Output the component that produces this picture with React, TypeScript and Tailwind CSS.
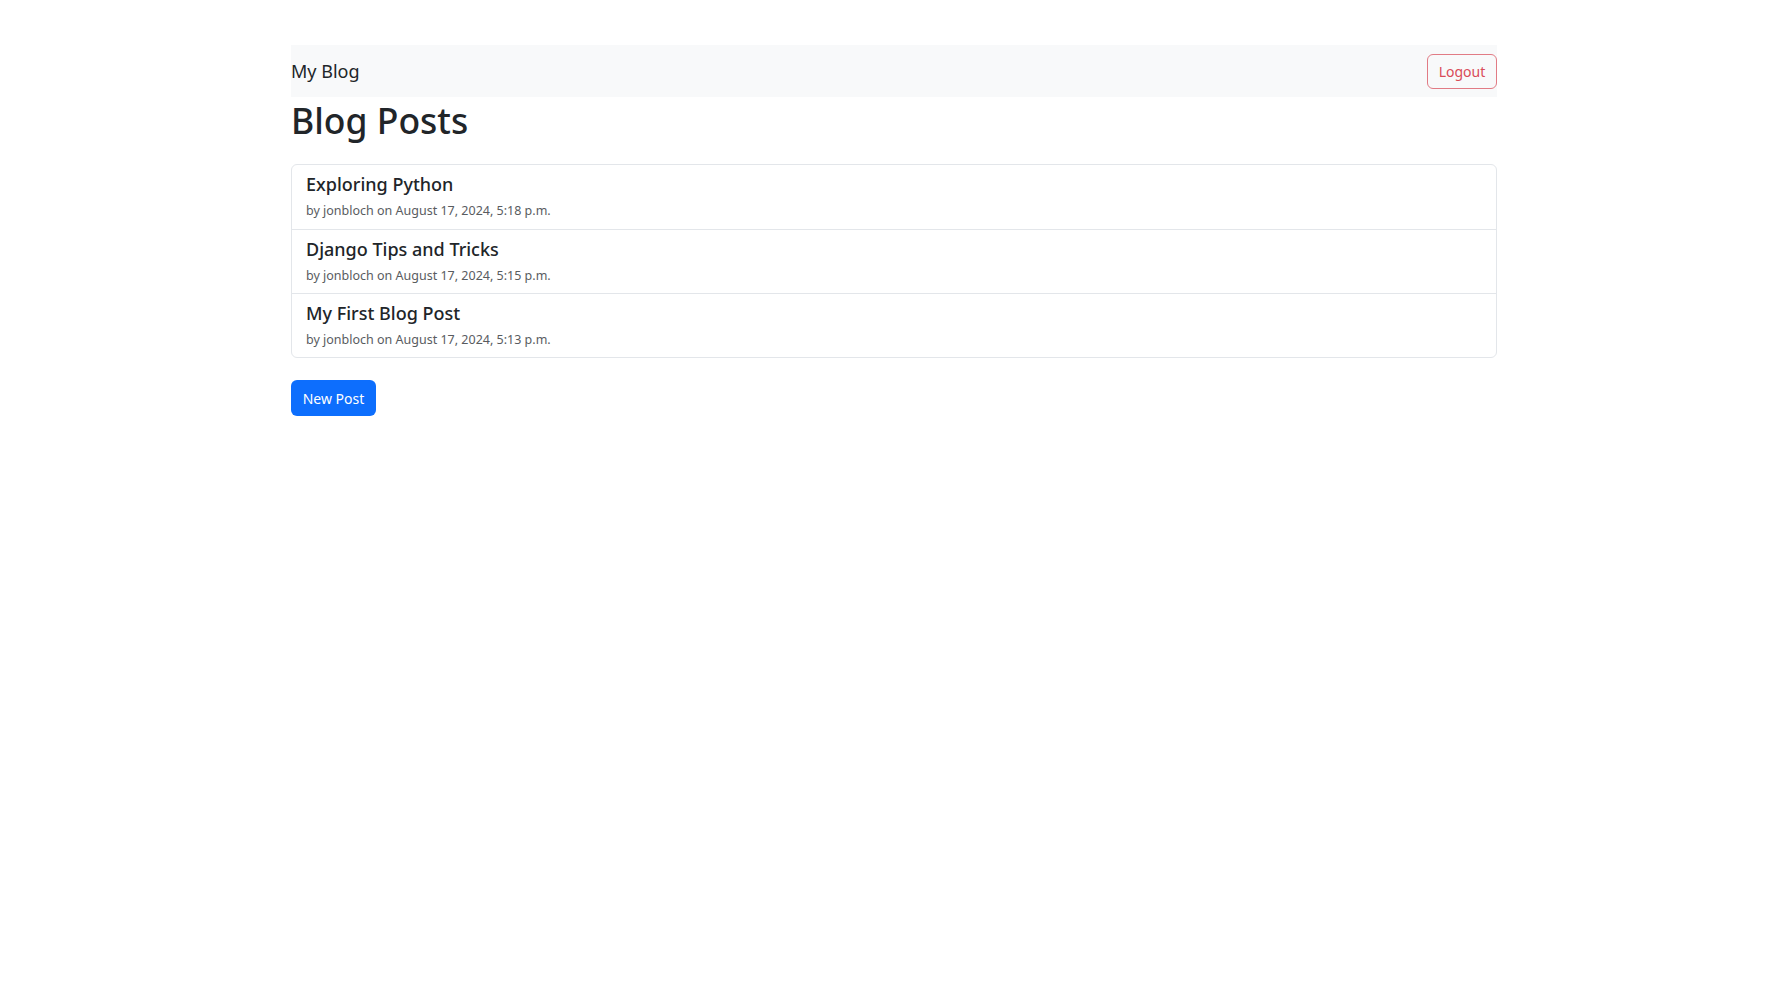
const posts = [
  { title: "Exploring Python", author: "jonbloch", date: "August 17, 2024, 5:18 p.m." },
  { title: "Django Tips and Tricks", author: "jonbloch", date: "August 17, 2024, 5:15 p.m." },
  { title: "My First Blog Post", author: "jonbloch", date: "August 17, 2024, 5:13 p.m." },
];

export default function App() {
  return (
    <div className="min-h-screen bg-white text-[#212529] font-['Segoe_UI','Noto_Sans',sans-serif]">
      <div className="w-[1206px] mx-auto pt-[45px]">
        <nav className="h-[52px] bg-[#f8f9fa] flex items-center justify-between">
          <a href="#" className="text-[18px] leading-none">My Blog</a>
          <button className="h-[35px] w-[70px] rounded-[6px] border border-[#e17b85] text-[#d94b58] text-[14px]">
            Logout
          </button>
        </nav>
        <h1 className="text-[35.5px] font-medium leading-[40px] mt-[3px] mb-[24px]">Blog Posts</h1>
        <ul className="border border-[#e3e6ea] rounded-[6px]">
          {posts.map((p, i) => (
            <li
              key={p.title}
              className={`h-[64px] px-[14px] pt-[7px] ${i > 0 ? "border-t border-[#e3e6ea]" : ""}`}
            >
              <h5 className="text-[18px] font-medium leading-[24px]">{p.title}</h5>
              <small className="block text-[12.5px] leading-[20px] mt-[5px] text-[#595c5f]">
                by {p.author} on {p.date}
              </small>
            </li>
          ))}
        </ul>
        <button className="mt-[22px] h-[36px] w-[85px] rounded-[6px] bg-[#0d6efd] text-white text-[14px]">
          New Post
        </button>
      </div>
    </div>
  );
}
